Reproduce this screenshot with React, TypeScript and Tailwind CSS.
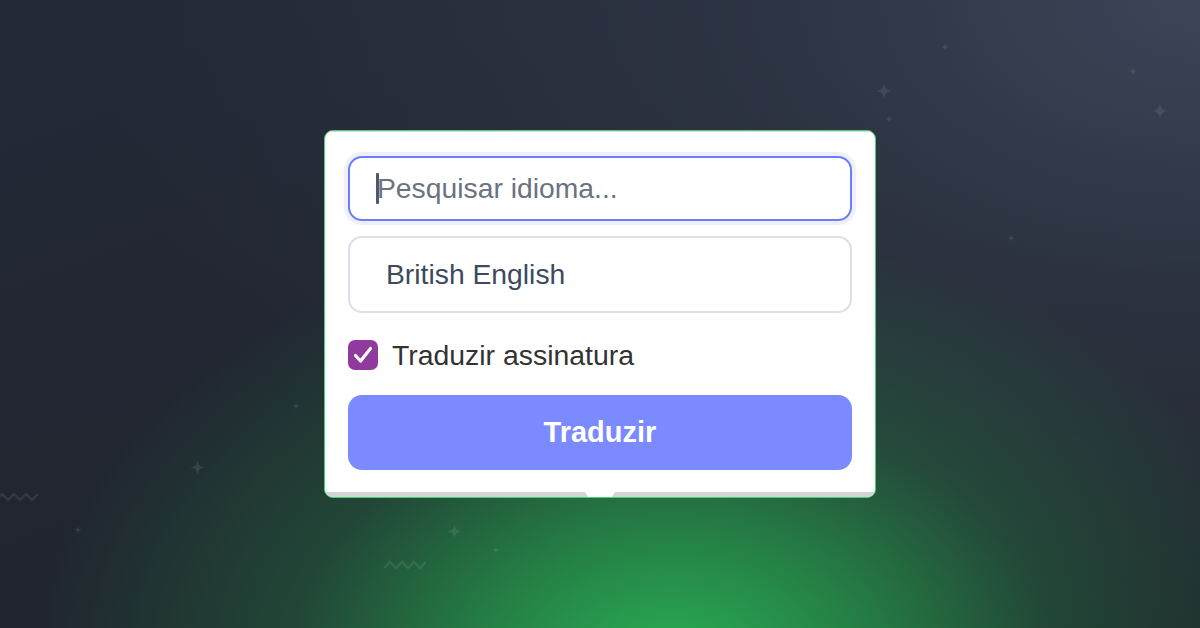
import React from "react";

const Star = ({ x, y, s, o = 0.09 }: { x: number; y: number; s: number; o?: number }) => (
  <svg
    className="absolute"
    style={{ left: x - s / 2, top: y - s / 2, opacity: o }}
    width={s}
    height={s}
    viewBox="0 0 20 20"
  >
    <path d="M10 0 C11 7 13 9 20 10 C13 11 11 13 10 20 C9 13 7 11 0 10 C7 9 9 7 10 0 Z" fill="#ffffff" />
  </svg>
);

const Zig = ({ x, y }: { x: number; y: number }) => (
  <svg className="absolute opacity-[0.09]" style={{ left: x, top: y - 5 }} width="42" height="10" viewBox="0 0 42 10">
    <path d="M0 8 L6 2 L12 8 L18 2 L24 8 L30 2 L36 8 L42 2" stroke="#ffffff" strokeWidth="2" fill="none" />
  </svg>
);

export default function App() {
  const stars: [number, number, number][] = [
    [945, 47, 8],
    [884, 91, 16],
    [889, 119, 8],
    [1133, 71, 8],
    [1160, 111, 16],
    [1011, 238, 8],
    [296, 406, 8],
    [197, 467, 15],
    [78, 530, 8],
    [454, 531, 15],
    [496, 550, 8],
  ];
  return (
    <div
      className="relative w-[1200px] h-[628px] overflow-hidden flex justify-center pt-[130px] bg-[radial-gradient(ellipse_640px_440px_at_56%_106%,#2aaf54_0%,rgba(38,150,75,0.8)_30%,rgba(35,110,65,0.45)_60%,rgba(34,80,60,0)_100%),radial-gradient(ellipse_1100px_700px_at_100%_0%,#3c4558_0%,rgba(52,60,76,0.6)_40%,rgba(40,46,58,0)_100%),linear-gradient(160deg,#232937_0%,#20252f_60%,#1e2229_100%)]"
      style={{ fontFamily: '"Liberation Sans", Arial, sans-serif' }}
    >
      {stars.map(([x, y, s], i) => (
        <Star key={i} x={x} y={y} s={s} />
      ))}
      <Zig x={-4} y={497} />
      <Zig x={384} y={565} />

      <div className="relative w-[552px] self-start rounded-[9px] border border-[#45d36f] bg-white flex flex-col overflow-hidden">
        <div className="h-[1px] bg-[#d9d9d9]" />
        <div className="px-[23px] pt-[24px] pb-[22px] flex flex-col">
          <div className="h-[65px] rounded-[14px] border-2 border-[#6d7df8] shadow-[0_0_0_4px_#eef0fd] flex items-center pl-[26px]">
            <span className="w-[3px] h-[31px] bg-[#4b5872] rounded-[1px] mr-[-2px]" />
            <span className="text-[28.3px] leading-none text-[#6b7280]">Pesquisar idioma...</span>
          </div>
          <div className="mt-[15px] h-[77px] rounded-[14px] border-2 border-[#dde0e9] flex items-center pl-[36px]">
            <span className="text-[28.3px] leading-none text-[#3c4a5e]">British English</span>
          </div>
          <div className="mt-[27px] h-[30px] flex items-center gap-[14px]">
            <div className="w-[30px] h-[30px] rounded-[7px] bg-[#8f3a9c] flex items-center justify-center">
              <svg width="24" height="24" viewBox="0 0 24 24">
                <path d="M4.5 12.5 L9.6 18 L19.5 5.5" stroke="#ffffff" strokeWidth="3.2" fill="none" strokeLinecap="round" strokeLinejoin="round" />
              </svg>
            </div>
            <span className="text-[28.4px] leading-none text-[#333333]">Traduzir assinatura</span>
          </div>
          <button className="mt-[25px] h-[75px] rounded-[14px] bg-[#7b8bff] text-white text-[29px] font-bold leading-none flex items-center justify-center">
            Traduzir
          </button>
        </div>
        <div className="h-[5px] flex">
          <div className="flex-1 bg-[#d4d4d4]" />
          <svg width="30" height="5" viewBox="0 0 30 5" className="block">
            <rect width="30" height="5" fill="#d4d4d4" />
            <polygon points="0,0 30,0 27,5 3,5" fill="#ffffff" />
          </svg>
          <div className="flex-1 bg-[#d4d4d4]" />
        </div>
      </div>
    </div>
  );
}
